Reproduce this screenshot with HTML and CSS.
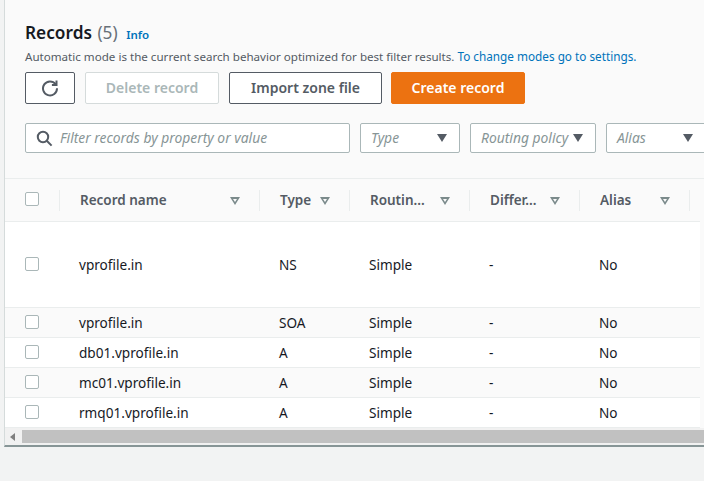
FILE: index.html
```html
<!DOCTYPE html>
<html lang="en">
<head>
    <meta charset="UTF-8">
    <meta name="viewport" content="width=device-width, initial-scale=1.0">
    <title>Records</title>
    <link rel="stylesheet" href="styles.css">
</head>
<body>
    <section class="panel">
        <header class="panel-head">
            <h2>Records <span class="count">(5)</span> <a class="info" href="#">Info</a></h2>
            <p class="desc">Automatic mode is the current search behavior optimized for best filter results. <a href="#">To change modes go to settings.</a></p>

            <div class="actions">
                <button class="btn btn-icon" aria-label="Refresh">
                    <svg width="18" height="18" viewBox="0 0 18 18" fill="none" stroke="#545b64" stroke-width="2">
                        <path d="M14.6 5.2A7 7 0 1 0 16 9.2"/>
                        <path d="M15.5 1.5v4.6h-4.6" stroke-linejoin="miter"/>
                    </svg>
                </button>
                <button class="btn btn-disabled">Delete record</button>
                <button class="btn btn-import">Import zone file</button>
                <button class="btn btn-primary">Create record</button>
            </div>

            <div class="filters">
                <div class="field field-search">
                    <svg width="17" height="17" viewBox="0 0 17 17" fill="none" stroke="#545b64" stroke-width="2">
                        <circle cx="7" cy="7" r="5.2"/>
                        <path d="M11 11l4.6 4.6"/>
                    </svg>
                    <span>Filter records by property or value</span>
                </div>
                <div class="field field-type"><span>Type</span><i class="caret"></i></div>
                <div class="field field-routing"><span>Routing policy</span><i class="caret"></i></div>
                <div class="field field-alias"><span>Alias</span><i class="caret"></i></div>
            </div>
        </header>

        <table class="records">
            <colgroup>
                <col class="col-check">
                <col class="col-name">
                <col class="col-type">
                <col class="col-routing">
                <col class="col-diff">
                <col class="col-alias">
                <col class="col-rest">
            </colgroup>
            <thead>
                <tr>
                    <th><div class="th-inner th-check"><i class="check"></i></div></th>
                    <th><div class="th-inner"><span>Record name</span><i class="sort"></i></div></th>
                    <th><div class="th-inner"><span>Type</span><i class="sort"></i></div></th>
                    <th><div class="th-inner"><span>Routin...</span><i class="sort"></i></div></th>
                    <th><div class="th-inner"><span>Differ...</span><i class="sort"></i></div></th>
                    <th><div class="th-inner"><span>Alias</span><i class="sort"></i></div></th>
                    <th></th>
                </tr>
            </thead>
            <tbody>
                <tr class="row-tall">
                    <td><i class="check"></i></td><td>vprofile.in</td><td>NS</td><td>Simple</td><td>-</td><td>No</td><td></td>
                </tr>
                <tr class="row-alt">
                    <td><i class="check"></i></td><td>vprofile.in</td><td>SOA</td><td>Simple</td><td>-</td><td>No</td><td></td>
                </tr>
                <tr>
                    <td><i class="check"></i></td><td>db01.vprofile.in</td><td>A</td><td>Simple</td><td>-</td><td>No</td><td></td>
                </tr>
                <tr class="row-alt">
                    <td><i class="check"></i></td><td>mc01.vprofile.in</td><td>A</td><td>Simple</td><td>-</td><td>No</td><td></td>
                </tr>
                <tr>
                    <td><i class="check"></i></td><td>rmq01.vprofile.in</td><td>A</td><td>Simple</td><td>-</td><td>No</td><td></td>
                </tr>
            </tbody>
        </table>

        <div class="scrollbar">
            <i class="scroll-left"></i>
            <div class="scroll-thumb"></div>
        </div>
    </section>
</body>
</html>
```

FILE: styles.css
```css
html, body {
    height: 100%;
    overflow: hidden;
}
body {
    margin: 0;
    padding-left: 4px;
    font-family: "Noto Sans", sans-serif;
    font-size: 14px;
    color: #16191f;
    background-color: #f2f3f3;
}
a {
    color: #0073bb;
    text-decoration: none;
}
button {
    font-family: inherit;
}

.panel {
    width: 700px;
    height: 447px;
    box-sizing: border-box;
    overflow: hidden;
    border-left: 1px solid #d5dbdb;
    border-bottom: 2px solid #879596;
    background-color: #fafafa;
}
.panel-head {
    height: 179px;
    box-sizing: border-box;
    padding: 21px 0 0 20px;
    border-bottom: 1px solid #eaeded;
}
.panel-head h2 {
    margin: 0;
    font-size: 17.25px;
    line-height: 24px;
    font-weight: 600;
}
.count {
    margin-left: 1px;
    font-weight: 400;
    color: #687078;
}
.info {
    margin-left: 4px;
    font-size: 11.5px;
    font-weight: 600;
}
.desc {
    margin: 0;
    height: 18px;
    font-size: 11.6px;
    line-height: 18px;
    color: #545b64;
}
.desc a {
    font-size: 11.75px;
}

.actions {
    display: flex;
    margin-top: 7px;
}
.btn {
    height: 32px;
    box-sizing: border-box;
    padding: 0 0 2px;
    border: 1px solid #545b64;
    border-radius: 2px;
    background-color: #fff;
    color: #545b64;
    font-size: 14px;
    font-weight: 600;
    flex-shrink: 0;
}
.btn-icon {
    width: 50px;
    margin-right: 10px;
    padding: 0;
    display: flex;
    align-items: center;
    justify-content: center;
}
.btn-disabled {
    width: 134px;
    margin-right: 10px;
    border-color: #d5dbdb;
    color: #aab7b8;
}
.btn-import {
    width: 153px;
    margin-right: 9px;
}
.btn-primary {
    width: 134px;
    border-color: #ec7211;
    background-color: #ec7211;
    color: #fff;
}

.filters {
    display: flex;
    margin-top: 19px;
}
.field {
    height: 30px;
    box-sizing: border-box;
    display: flex;
    align-items: center;
    border: 1px solid #aab7b8;
    border-radius: 2px;
    background-color: #fff;
    font-size: 13.85px;
    font-style: italic;
    color: #879596;
    flex-shrink: 0;
}
.field span {
    padding-bottom: 2px;
}
.field-search {
    width: 325px;
    margin-right: 10px;
    padding-left: 10px;
}
.field-search span {
    margin-left: 7px;
}
.field-type {
    width: 100px;
    margin-right: 10px;
    padding-left: 10px;
}
.field-routing {
    width: 126px;
    margin-right: 10px;
    padding-left: 10px;
}
.field-alias {
    width: 100px;
    padding-left: 10px;
}
.caret {
    margin-left: auto;
    margin-right: 12px;
    width: 0;
    height: 0;
    border-left: 5.5px solid transparent;
    border-right: 5.5px solid transparent;
    border-top: 8px solid #545b64;
}

.records {
    width: 695px;
    table-layout: fixed;
    border-collapse: collapse;
}
.col-check { width: 55px; }
.col-name { width: 200px; }
.col-type { width: 90px; }
.col-routing { width: 120px; }
.col-diff { width: 110px; }
.col-alias { width: 110px; }

.records th {
    height: 42px;
    padding: 0;
    border-bottom: 1px solid #eaeded;
    font-size: 13.5px;
    font-weight: 600;
    color: #545b64;
    text-align: left;
}
.th-inner {
    height: 21px;
    display: flex;
    align-items: center;
    padding: 0 19px 0 20px;
    border-right: 1px solid #eaeded;
}
.sort {
    margin-left: auto;
    margin-top: 1px;
    width: 0;
    height: 0;
    border-left: 5px solid transparent;
    border-right: 5px solid transparent;
    border-top: 8px solid #7b8a8b;
    position: relative;
}
/* the hollow middle of the sort arrow */
.sort::after {
    content: "";
    position: absolute;
    left: -2px;
    top: -6px;
    border-left: 2px solid transparent;
    border-right: 2px solid transparent;
    border-top: 3px solid #fafafa;
}
.check {
    display: block;
    width: 12px;
    height: 12px;
    margin-bottom: 2px;
    border: 1px solid #aab7b8;
    border-radius: 2px;
    background-color: #fff;
}
.records td {
    height: 29px;
    padding: 0 0 0 19px;
    border-bottom: 1px solid #eaeded;
    background-color: #fff;
    font-size: 13.6px;
}
.records td:first-child {
    padding-left: 20px;
}
.records .row-tall td {
    height: 85px;
}
.records .row-alt td {
    background-color: #fafafa;
}

.scrollbar {
    height: 17px;
    display: flex;
    align-items: center;
    background-color: #f1f1f1;
}
.scroll-left {
    width: 0;
    height: 0;
    margin: 0 7px 0 5px;
    border-top: 4px solid transparent;
    border-bottom: 4px solid transparent;
    border-right: 5px solid #7f7f7f;
}
.scroll-thumb {
    flex: 1;
    height: 13px;
    background-color: #c1c1c1;
}
```
